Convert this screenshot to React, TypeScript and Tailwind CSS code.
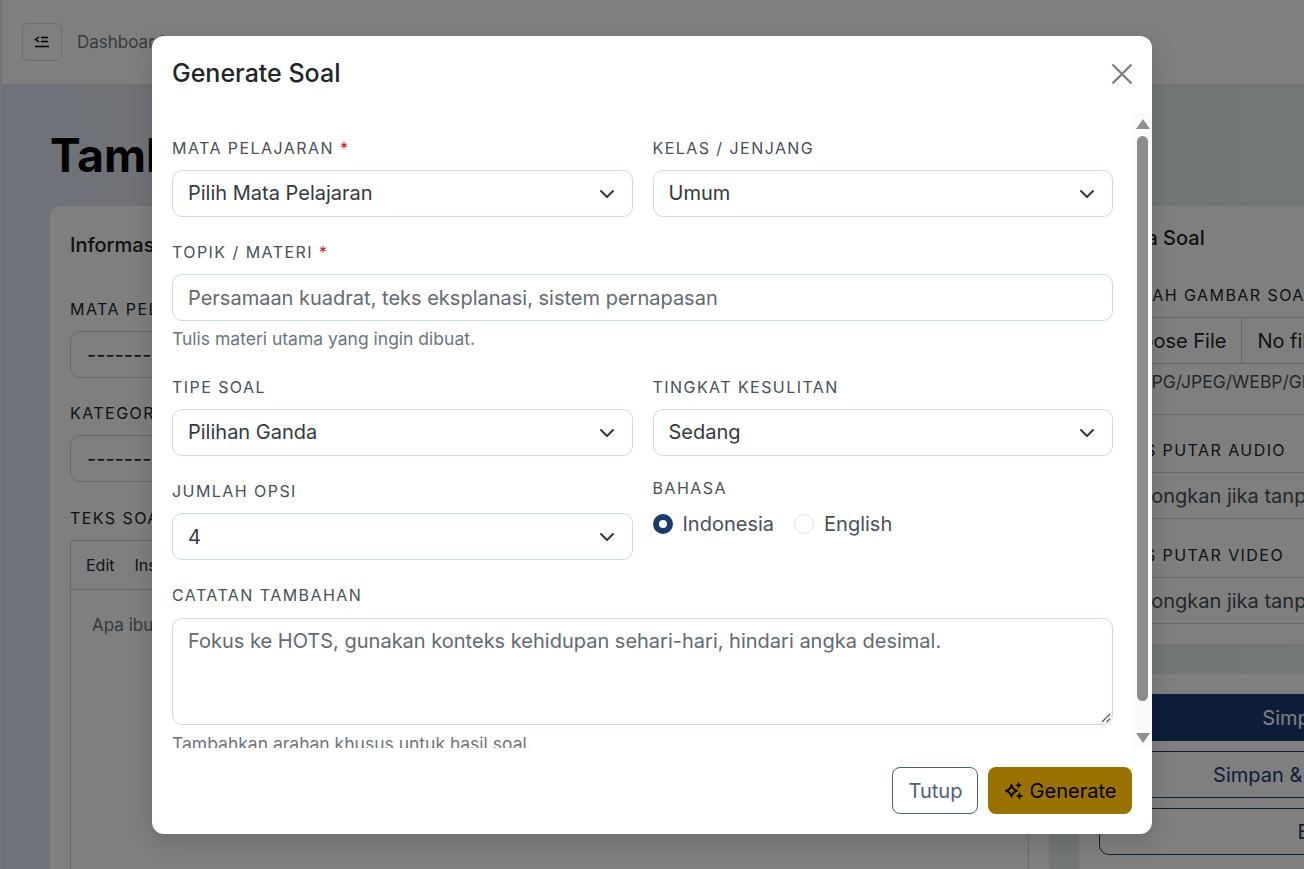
const font = { fontFamily: 'Inter, "Noto Sans", sans-serif' };

const labelCls = 'text-[16px] leading-[24px] tracking-[0.09em] uppercase';
const fieldCls = 'h-[47px] w-full rounded-[10px] border border-[#c9d8ea] bg-white pl-[15px] flex items-center text-[20px]';
const pageField = 'h-[47px] rounded-[10px] border border-[#ced4da] pl-[16px] flex items-center text-[20px]';

const Label = ({ text, required }: { text: string; required?: boolean }) => (
    <div className={`${labelCls} text-[#495057] mb-[10px]`}>
        {text} {required && <span className="text-[#c4151c]">*</span>}
    </div>
);

const Select = ({ value, flush }: { value: string; flush?: boolean }) => (
    <div className={`${fieldCls} justify-between pr-[17px] text-[#343a40]`}>
        <span className={flush ? '' : 'pb-[1px]'}>{value}</span>
        <svg width="16" height="16" viewBox="0 0 16 16" fill="none" stroke="#343a40" strokeWidth="2" strokeLinecap="round" strokeLinejoin="round">
            <path d="m2 5 6 6 6-6" />
        </svg>
    </div>
);

const Help = ({ text, className = 'mt-[8px]' }: { text: string; className?: string }) => (
    <p className={`${className} text-[17.5px] leading-[21px] text-[#6c757d]`}>{text}</p>
);

const Radio = ({ label, checked }: { label: string; checked?: boolean }) => (
    <div className="flex items-center gap-[10px]">
        {checked
            ? <span className="w-[20px] h-[20px] rounded-full border-[6px] border-[#1a3a70] bg-white" />
            : <span className="w-[20px] h-[20px] rounded-full border border-[#dee2e6] bg-white" />}
        <span className="text-[20px] leading-[30px] text-[#495057]">{label}</span>
    </div>
);

const PageLabel = ({ text, className = '' }: { text: string; className?: string }) => (
    <div className={`${labelCls} text-[#212529] whitespace-nowrap ${className}`}>{text}</div>
);

const BackgroundPage = () => (
    <div className="h-[869px] w-[1304px] overflow-hidden border-l-2 border-[#e6e8ec] bg-gradient-to-r from-[#dfe4f0] to-[#e6eeee]">
        <header className="h-[85px] bg-white border-b border-[#dee2e6] flex items-center pl-[20px] pb-[1px]">
            <div className="w-[40px] h-[38px] rounded-[6px] border border-[#d5d8dc] flex items-center justify-center">
                <svg width="16" height="14" viewBox="0 0 16 14" fill="none" stroke="#000" strokeWidth="1.5">
                    <path d="M5 2 1.5 4.5 5 7" />
                    <path d="M7 2.5h7M7 6.5h7M1 11.5h14" />
                </svg>
            </div>
            <span className="ml-[15px] mt-[3px] text-[17px] text-[#6c757d]">Dashboard</span>
        </header>
        <main className="pl-[48px] pt-[39px] w-[1700px]">
            <h1 className="text-[46px] leading-[62px] font-bold text-black">Tambah Soal</h1>
            <div className="flex gap-[30px] mt-[20px] items-start">
                <section className="w-[999px] h-[700px] rounded-[10px] bg-white p-[20px] shrink-0">
                    <h2 className="text-[20px] leading-[38px] font-medium text-[#212529] mb-[33px]">Informasi Soal</h2>
                    <PageLabel text="MATA PELAJARAN" />
                    <div className={`${pageField} mt-[10px] text-[#212529]`}>---------------</div>
                    <PageLabel text="KATEGORI" className="mt-[23px]" />
                    <div className={`${pageField} mt-[10px] text-[#212529]`}>---------------</div>
                    <PageLabel text="TEKS SOAL" className="mt-[24px]" />
                    <div className="mt-[10px] border border-[#ced4da] h-[400px] w-[959px]">
                        <div className="h-[49px] border-b border-[#ced4da] flex items-center gap-[20px] px-[15px] text-[16px] text-[#1f2d45]">
                            <span>Edit</span>
                            <span>Insert</span>
                        </div>
                        <p className="px-[21px] pt-[23px] text-[17px] text-[#6c757d]">Apa ibu kota Indonesia?</p>
                    </div>
                </section>
                <aside className="w-[484px] shrink-0 flex flex-col gap-[30px]">
                    <section className="rounded-[10px] bg-white px-[20px] pt-[20px] h-[438px]">
                        <h2 className="text-[20px] leading-[24px] font-medium text-[#212529] mb-[33px]">Media Soal</h2>
                        <PageLabel text="UNGGAH GAMBAR SOAL" />
                        <div className={`${pageField} mt-[10px] text-[#212529] !pl-0`}>
                            <span className="pl-[15px] pr-[15px] h-full flex items-center border-r border-[#ced4da]">Choose File</span>
                            <span className="pl-[15px]">No file chosen</span>
                        </div>
                        <p className="mt-[7px] text-[17.5px] leading-[21px] text-[#495057]">PNG/JPG/JPEG/WEBP/GIF</p>
                        <div className="mt-[22px] border-t border-[#ced4da]" />
                        <PageLabel text="BATAS PUTAR AUDIO" className="mt-[23px]" />
                        <div className={`${pageField} mt-[10px] text-[#495057]`}>Kosongkan jika tanpa batas</div>
                        <PageLabel text="BATAS PUTAR VIDEO" className="mt-[24px]" />
                        <div className={`${pageField} mt-[10px] text-[#495057]`}>Kosongkan jika tanpa batas</div>
                    </section>
                    <section className="rounded-[10px] bg-white p-[20px] flex flex-col gap-[10px] text-[20px]">
                        <div className="h-[47px] rounded-[10px] bg-[#1a3a70] text-white flex items-center justify-center">Simpan Soal</div>
                        <div className="h-[47px] rounded-[10px] border border-[#1a3a70] text-[#1a3a70] flex items-center justify-center">Simpan &amp; Tambah Lagi</div>
                        <div className="h-[47px] rounded-[10px] border border-[#1a3a70] text-[#1a3a70] flex items-center justify-center">Batal</div>
                    </section>
                </aside>
            </div>
        </main>
    </div>
);

export default function App() {
    return (
        <div style={font} className="relative h-[869px] w-[1304px] overflow-hidden">
            <BackgroundPage />
            <div className="absolute inset-0 bg-black/50" />
            <div className="absolute left-[152px] top-[36px] w-[1000px] h-[798px] rounded-[12px] bg-white flex flex-col overflow-hidden shadow-[0_8px_24px_rgba(0,0,0,0.15)]">
                <div className="h-[77px] flex items-center justify-between pl-[20px] pr-[19px] pb-[2px] shrink-0">
                    <h5 className="text-[25px] font-medium text-[#212529]">Generate Soal</h5>
                    <svg width="22" height="22" viewBox="0 0 22 22" fill="none" stroke="#808080" strokeWidth="2.4">
                        <path d="m1.5 1.5 19 19M20.5 1.5l-19 19" />
                    </svg>
                </div>
                <div className="flex-1 flex min-h-0">
                    <div className="flex-1 overflow-hidden pl-[20px] pr-[20px] pt-[23px]">
                        <div className="grid grid-cols-2 gap-x-[20px] mb-[23px]">
                            <div>
                                <Label text="Mata Pelajaran" required />
                                <Select value="Pilih Mata Pelajaran" />
                            </div>
                            <div>
                                <Label text="Kelas / Jenjang" />
                                <Select value="Umum" />
                            </div>
                        </div>
                        <Label text="Topik / Materi" required />
                        <div className={`${fieldCls} text-[#636a71]`}>Persamaan kuadrat, teks eksplanasi, sistem pernapasan</div>
                        <Help text="Tulis materi utama yang ingin dibuat." className="mt-[7px]" />
                        <div className="grid grid-cols-2 gap-x-[20px] mt-[26px] mb-[23px]">
                            <div>
                                <Label text="Tipe Soal" />
                                <Select value="Pilihan Ganda" />
                            </div>
                            <div>
                                <Label text="Tingkat Kesulitan" />
                                <Select value="Sedang" />
                            </div>
                        </div>
                        <div className="grid grid-cols-2 gap-x-[20px] mb-[23px]">
                            <div>
                                <Label text="Jumlah Opsi" />
                                <Select value="4" flush />
                            </div>
                            <div className="mt-[-3px]">
                                <Label text="Bahasa" />
                                <div className="flex items-center gap-[20px] mt-[-1px]">
                                    <Radio label="Indonesia" checked />
                                    <Radio label="English" />
                                </div>
                            </div>
                        </div>
                        <Label text="Catatan Tambahan" />
                        <div className="relative h-[107px] mt-[11px] rounded-[10px] border border-[#c9d8ea] pl-[15px] pt-[7px] text-[20px] leading-[30px] text-[#636a71]">
                            Fokus ke HOTS, gunakan konteks kehidupan sehari-hari, hindari angka desimal.
                            <svg className="absolute right-[1px] bottom-[1px]" width="10" height="10" viewBox="0 0 10 10" stroke="#555" strokeWidth="1.2">
                                <path d="m1 9 8-8M5.5 9 9 5.5" />
                            </svg>
                        </div>
                        <Help text="Tambahkan arahan khusus untuk hasil soal." />
                    </div>
                    <div className="w-[19px] shrink-0 bg-[#fafafa] flex flex-col items-center pt-[6px] pb-[5px]">
                        <svg width="14" height="10" viewBox="0 0 14 10" fill="#8f8f8f"><path d="M7 0 14 10H0Z" /></svg>
                        <div className="w-[11px] flex-1 mt-[7px] mb-[32px] rounded-full bg-[#8c8c8c]" />
                        <svg width="14" height="10" viewBox="0 0 14 10" fill="#8f8f8f"><path d="M0 0H14L7 10Z" /></svg>
                    </div>
                </div>
                <div className="h-[86px] flex items-center justify-end gap-[10px] pr-[20px] pb-[1px] shrink-0">
                    <button className="w-[86px] h-[47px] pl-[1px] rounded-[8px] border border-[#4a5f80] text-[20px] text-[#4a5f80]">Tutup</button>
                    <button className="w-[144px] h-[47px] rounded-[8px] bg-[#9a7200] text-[20px] text-black flex items-center justify-center gap-[6px]">
                        <svg width="20" height="20" viewBox="0 0 20 20">
                            <path d="M7.500 4C8.200 7 9.500 8.800 13 9.800 9.500 10.800 8.200 12.500 7.500 15.500 6.800 12.500 5.500 10.800 2 9.800 5.500 8.800 6.800 7 7.500 4Z" fill="none" stroke="#000" strokeWidth="1.800" strokeLinejoin="round" />
                            <path d="M14.500 1c.4 2 1 2.700 3 3.200-2 .5-2.600 1.200-3 3.200-.4-2-1-2.700-3-3.200 2-.5 2.600-1.200 3-3.200ZM15.500 11.500c.4 2.200 1.200 3 3.500 3.500-2.300.5-3.100 1.300-3.500 3.500-.4-2.200-1.200-3-3.500-3.500 2.300-.5 3.100-1.300 3.500-3.500Z" fill="#000" stroke="#000" strokeWidth="0.4" />
                        </svg>
                        Generate
                    </button>
                </div>
            </div>
        </div>
    );
}
